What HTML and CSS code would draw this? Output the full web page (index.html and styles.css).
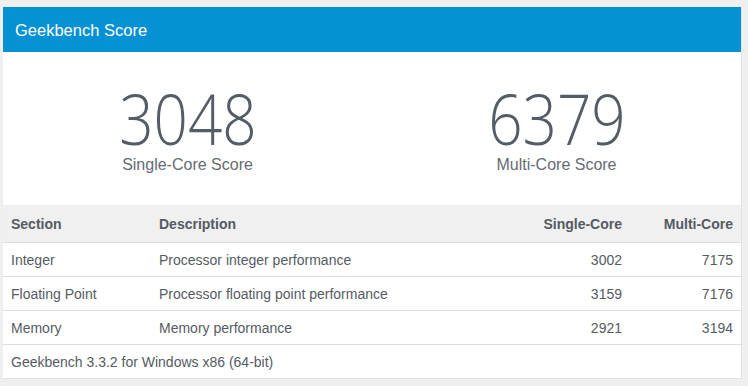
FILE: index.html
```html
<!DOCTYPE html>
<html>
<head>
<meta charset="utf-8">
<link rel="stylesheet" href="styles.css">
</head>
<body>
<div class="card">
  <div class="card-header">Geekbench Score</div>
  <div class="scores">
    <div class="score">
      <div class="score-value"><span>3048</span></div>
      <div class="score-label">Single-Core Score</div>
    </div>
    <div class="score">
      <div class="score-value"><span>6379</span></div>
      <div class="score-label">Multi-Core Score</div>
    </div>
  </div>
  <table class="results">
    <colgroup>
      <col class="c-section">
      <col class="c-desc">
      <col class="c-single">
      <col class="c-multi">
    </colgroup>
    <thead>
      <tr><th>Section</th><th>Description</th><th class="num">Single-Core</th><th class="num">Multi-Core</th></tr>
    </thead>
    <tbody>
      <tr><td>Integer</td><td>Processor integer performance</td><td class="num">3002</td><td class="num">7175</td></tr>
      <tr><td>Floating Point</td><td>Processor floating point performance</td><td class="num">3159</td><td class="num">7176</td></tr>
      <tr><td>Memory</td><td>Memory performance</td><td class="num">2921</td><td class="num">3194</td></tr>
    </tbody>
    <tfoot>
      <tr><td colspan="4">Geekbench 3.3.2 for Windows x86 (64-bit)</td></tr>
    </tfoot>
  </table>
</div>
</body>
</html>
```
FILE: styles.css
```css
html, body {
  margin: 0;
  padding: 0;
  background: #efefef;
}
body {
  padding: 7px 0 0 3px;
  font-family: "Liberation Sans", Arial, sans-serif;
  color: #555b63;
}
.card {
  width: 738px;
  background: #fff;
  border-right: 1px solid #e2e2e2;
  border-bottom: 1px solid #e2e2e2;
}
.card-header {
  height: 45px;
  line-height: 46px;
  background: #0591d3;
  color: #fff;
  font-size: 16.5px;
  padding-left: 12px;
}
.scores {
  display: grid;
  grid-template-columns: 1fr 1fr;
  padding: 31px 0 30px;
}
.score {
  text-align: center;
}
.score-value {
  font-family: "Open Sans", sans-serif;
  font-weight: 350;
  font-size: 70px;
  line-height: 70px;
  height: 70px;
  color: #545c67;
  margin-bottom: 2px;
}
.score-value span {
  display: inline-block;
  transform: scaleX(0.86);
}
.score-label {
  font-size: 16px;
  line-height: 20px;
  color: #666b72;
}
.results {
  width: 100%;
  border-collapse: collapse;
  font-size: 14px;
}
.c-section { width: 148px; }
.c-single { width: 120px; }
.c-multi { width: 111px; }
.results th {
  background: #f0f0f0;
  font-weight: bold;
  text-align: left;
  height: 37px;
  padding: 0 8px;
  color: #545a62;
}
.results td {
  height: 33px;
  padding: 0 8px;
  border-top: 1px solid #dedede;
}
.results .num {
  text-align: right;
}
```
